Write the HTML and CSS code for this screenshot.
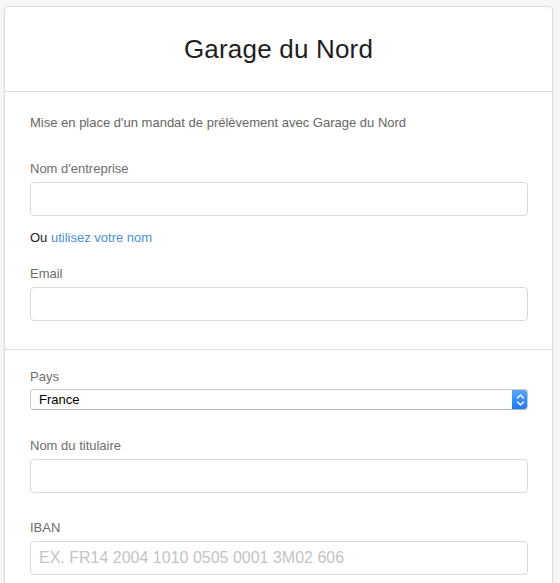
FILE: index.html
```html
<!DOCTYPE html>
<html lang="fr">
<head>
<meta charset="utf-8">
<title>Garage du Nord</title>
<link rel="stylesheet" href="styles.css">
</head>
<body>
<div class="card">
  <header class="card-header">
    <h1 class="title">Garage du Nord</h1>
  </header>
  <section class="section section-first">
    <p class="intro">Mise en place d'un mandat de prélèvement avec Garage du Nord</p>
    <div class="field">
      <label class="label">Nom d'entreprise</label>
      <div class="input"></div>
    </div>
    <p class="alt">Ou <a class="link" href="#">utilisez votre nom</a></p>
    <div class="field">
      <label class="label">Email</label>
      <div class="input"></div>
    </div>
  </section>
  <section class="section section-second">
    <div class="field field-select">
      <label class="label">Pays</label>
      <div class="select">
        <span class="select-value">France</span>
        <span class="select-stepper">
          <svg width="9" height="14" viewBox="0 0 9 14"><path d="M1.5 5 L4.5 2 L7.5 5 M1.5 9 L4.5 12 L7.5 9" fill="none" stroke="#fff" stroke-width="1.4" stroke-linecap="round" stroke-linejoin="round"/></svg>
        </span>
      </div>
    </div>
    <div class="field field-gap field-after-select">
      <label class="label">Nom du titulaire</label>
      <div class="input"></div>
    </div>
    <div class="field field-gap">
      <label class="label">IBAN</label>
      <div class="input"><span class="placeholder">EX. FR14 2004 1010 0505 0001 3M02 606</span></div>
    </div>
  </section>
</div>
</body>
</html>
```
FILE: styles.css
```css
html, body {
  margin: 0;
  padding: 0;
  background: #f6f6f6;
}
body {
  padding: 6px 7px 0 4px;
  font-family: "Liberation Sans", Arial, sans-serif;
  color: #333;
}
.card {
  background: #fff;
  border: 1px solid #dcdcdc;
  border-radius: 4px;
  box-shadow: 0 1px 2px rgba(0,0,0,0.08);
  height: 600px;
}
.card-header {
  height: 84px;
  border-bottom: 1px solid #dcdcdc;
  display: flex;
  align-items: center;
  justify-content: center;
}
.title {
  margin: 0;
  font-size: 26px;
  font-weight: normal;
  color: #1e1e1e;
  line-height: 30px;
  letter-spacing: 0.2px;
}
.section {
  padding: 0 24px 0 25px;
}
.section-first {
  padding-top: 22px;
  padding-bottom: 28px;
  border-bottom: 1px solid #dcdcdc;
}
.section-second {
  padding-top: 18px;
}
.intro {
  margin: 0 0 28px;
  font-size: 13px;
  line-height: 18px;
  color: #666;
}
.field {
  display: flex;
  flex-direction: column;
  gap: 4px;
}
.field-select {
  gap: 3px;
}
.field-gap {
  margin-top: 26px;
}
.field-after-select {
  margin-top: 27px;
}
.label {
  font-size: 13px;
  line-height: 18px;
  color: #6e6e6e;
}
.input {
  height: 32px;
  border: 1px solid #d9d9d9;
  border-radius: 4px;
  display: flex;
  align-items: center;
  padding: 0 8px;
}
.placeholder {
  font-size: 16px;
  color: #c4c4c4;
}
.alt {
  margin: 13px 0 18px;
  font-size: 13px;
  line-height: 18px;
  color: #222;
}
.link {
  color: #4a90d9;
  text-decoration: none;
}
.select {
  height: 19px;
  border: 1px solid #c8c8c8;
  border-bottom-color: #b4b4b4;
  border-radius: 4px;
  display: flex;
  align-items: center;
  justify-content: space-between;
  overflow: hidden;
}
.select-value {
  font-size: 13px;
  color: #000;
  padding-left: 8px;
}
.select-stepper {
  width: 16px;
  height: 21px;
  margin: -1px -1px -1px 0;
  background: linear-gradient(#5aa8ff, #1a76f0);
  border-radius: 0 4px 4px 0;
  display: flex;
  align-items: center;
  justify-content: center;
}
```
